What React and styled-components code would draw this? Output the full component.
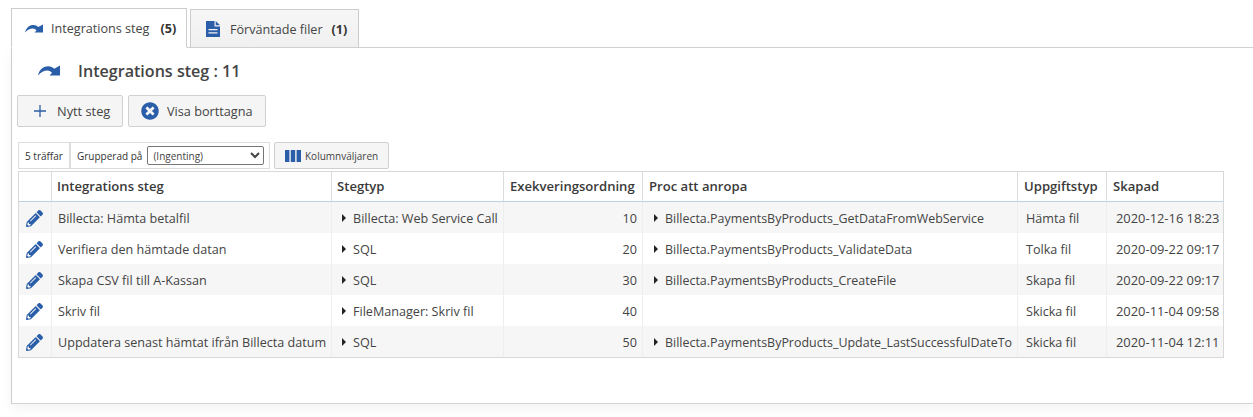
import React from 'react';
import styled, { createGlobalStyle } from 'styled-components';
import { FaPencilAlt, FaTimesCircle } from 'react-icons/fa';

const BLUE = '#2b5ea8';

const Global = createGlobalStyle`
  html, body { margin: 0; padding: 0; background: #fff; }
  body { font-family: "Open Sans", "Noto Sans", "Liberation Sans", sans-serif; color: #333; overflow: hidden; }
`;

const Page = styled.div`
  width: 1253px;
  height: 417px;
  padding: 8px 0 0 11px;
  box-sizing: border-box;
  overflow: hidden;
  background: #fff;
`;

const Tabs = styled.div`
  position: relative;
  z-index: 1;
  display: flex;
  align-items: flex-end;
  height: 40px;
  gap: 3px;
  border-bottom: 1px solid #d0d0d0;
  box-sizing: border-box;
  background: #fff;
`;

const Tab = styled.div`
  display: flex;
  align-items: center;
  box-sizing: border-box;
  width: ${p => p.$width}px;
  height: ${p => (p.$active ? 40 : 39)}px;
  padding: 1px 0 0 ${p => p.$pad}px;
  gap: ${p => p.$gap}px;
  border: 1px solid #ccc;
  border-bottom: ${p => (p.$active ? '1px solid #fff' : '1px solid #d0d0d0')};
  background: ${p => (p.$active ? '#fff' : 'linear-gradient(to bottom, #f6f6f6, #f0f0f0)')};
  font-size: 12.6px;
  color: #444;
  margin-bottom: -1px;
`;

const Count = styled.b`
  font-weight: 700;
  margin-left: ${p => p.$gap}px;
  color: #333;
`;

const Panel = styled.div`
  height: 356px;
  box-sizing: border-box;
  background: #fff;
  border-left: 1px solid #ccc;
  border-bottom: 1px solid #d4d4d4;
  padding-left: 5px;
  box-shadow: 0 5px 12px rgba(0, 0, 0, 0.05);
`;

const Title = styled.div`
  display: flex;
  align-items: center;
  height: 47px;
  padding: 0 0 2px 21px;
  box-sizing: border-box;
  gap: 18px;
  font-size: 16.1px;
  font-weight: 600;
  color: #444;
`;

const Actions = styled.div`
  display: flex;
  gap: 5px;
  height: 32px;
`;

const Button = styled.div`
  display: flex;
  align-items: center;
  box-sizing: border-box;
  width: ${p => p.$width}px;
  height: ${p => p.$height || 32}px;
  padding-left: ${p => p.$pad}px;
  gap: ${p => p.$gap}px;
  border: 1px solid #d0d0d0;
  border-radius: 2px;
  background: #f5f5f5;
  font-size: ${p => p.$size || 12.7}px;
  color: #444;
`;

const Toolbar = styled.div`
  display: flex;
  gap: 4px;
  height: 27px;
  margin: 15px 0 2px 1px;
`;

const Group = styled.div`
  display: flex;
  box-sizing: border-box;
  height: 27px;
  border: 1px solid #ddd;
  font-size: 10px;
  color: #333;
`;

const Hits = styled.div`
  display: flex;
  align-items: center;
  box-sizing: border-box;
  width: 52px;
  padding-left: 6px;
  border-right: 2px solid #ddd;
`;

const GroupBy = styled.label`
  display: flex;
  align-items: center;
  box-sizing: border-box;
  width: 198px;
  padding-left: 6px;
  gap: 5px;
`;

const Select = styled.select`
  width: 117px;
  height: 19px;
  padding: 0 0 0 1px;
  font: inherit;
  color: #444;
  background: #fff;
  border: 1px solid #767676;
  border-radius: 2px;
`;

const Table = styled.table`
  table-layout: fixed;
  border-collapse: separate;
  border-spacing: 0;
  width: 1206px;
  margin-left: 1px;
  border: 1px solid #d8d8d8;
  font-size: 12.6px;
`;

const Head = styled.th`
  box-sizing: border-box;
  height: 30px;
  padding: 0 0 1px ${p => p.$pad}px;
  text-align: left;
  font-weight: 600;
  font-size: 13.1px;
  color: #3a3a3a;
  white-space: nowrap;
  overflow: hidden;
  border-left: ${p => (p.$first ? 'none' : '1px solid #dcdcdc')};
  border-bottom: 1px solid #bcd0e8;
`;

const Row = styled.tr`
  background: ${p => (p.$odd ? '#f6f6f6' : '#fff')};
`;

const Cell = styled.td`
  box-sizing: border-box;
  height: 31px;
  padding: 1px ${p => (p.$right ? 5 : 2)}px 0 ${p => p.$pad}px;
  text-align: ${p => (p.$right ? 'right' : 'left')};
  font-size: ${p => p.$size || 12.6}px;
  color: #444;
  white-space: nowrap;
  overflow: hidden;
  border-left: ${p => (p.$first ? 'none' : '1px solid #eeeeee')};
`;

const Edit = styled(FaPencilAlt)`
  display: block;
  width: 17px;
  height: 17px;
  margin-left: -1px;
  color: ${BLUE};
`;

const Arrow = styled.span`
  display: inline-block;
  width: 0;
  height: 0;
  margin-right: 7px;
  vertical-align: 1px;
  border-left: 4px solid #222;
  border-top: 4px solid transparent;
  border-bottom: 4px solid transparent;
`;

const Redo = ({ w, h }) => (
  <svg width={w} height={h} viewBox="0 0 18 9" fill={BLUE}>
    <path d="M0 8.500C1.200 3.400 4.800 1 8.200 1c2.200 0 3.900.9 5 2.100L18 .5V8.500H9.500l2-2.100C10.600 5.300 9.400 4.500 7.700 4.500 4.900 4.500 2.500 5.900 0 8.500z" />
  </svg>
);

const DocIcon = () => (
  <svg width="14" height="16" viewBox="0 0 14 16">
    <path fill={BLUE} d="M0 0h8.500v5.500H14V16H0z" />
    <path fill={BLUE} d="M9.700 0 14 4.300H9.700z" />
    <path fill="#f4f4f4" d="M2.500 8h9v1.300h-9zM2.500 11.200h9v1.300h-9z" />
  </svg>
);

const ColumnsIcon = () => (
  <svg width="16" height="12" viewBox="0 0 16 12" fill={BLUE}>
    <rect x="0" y="0" width="4.400" height="12" />
    <rect x="5.800" y="0" width="4.400" height="12" />
    <rect x="11.600" y="0" width="4.400" height="12" />
  </svg>
);

const PlusIcon = () => (
  <svg width="14" height="14" viewBox="0 0 14 14" stroke={BLUE} strokeWidth="1.300">
    <path d="M7 1v12M1 7h12" />
  </svg>
);

const columns = [
  { title: '', width: 32, pad: 6 },
  { title: 'Integrations steg', width: 280, pad: 5 },
  { title: 'Stegtyp', width: 172, pad: 5 },
  { title: 'Exekveringsordning', width: 139, pad: 6 },
  { title: 'Proc att anropa', width: 375, pad: 6 },
  { title: 'Uppgiftstyp', width: 89, pad: 6 },
  { title: 'Skapad', width: 117, pad: 6 },
];

const rows = [
  ['Billecta: Hämta betalfil', 'Billecta: Web Service Call', 10, 'Billecta.PaymentsByProducts_GetDataFromWebService', 'Hämta fil', '2020-12-16 18:23'],
  ['Verifiera den hämtade datan', 'SQL', 20, 'Billecta.PaymentsByProducts_ValidateData', 'Tolka fil', '2020-09-22 09:17'],
  ['Skapa CSV fil till A-Kassan', 'SQL', 30, 'Billecta.PaymentsByProducts_CreateFile', 'Skapa fil', '2020-09-22 09:17'],
  ['Skriv fil', 'FileManager: Skriv fil', 40, '', 'Skicka fil', '2020-11-04 09:58'],
  ['Uppdatera senast hämtat ifrån Billecta datum', 'SQL', 50, 'Billecta.PaymentsByProducts_Update_LastSuccessfulDateTo', 'Skicka fil', '2020-11-04 12:11'],
];

export default function App() {
  return (
    <Page>
      <Global />
      <Tabs>
        <Tab $active $width={176} $pad={13} $gap={8}>
          <Redo w={18} h={9} />
          <span>Integrations steg<Count $gap={11}>(5)</Count></span>
        </Tab>
        <Tab $width={169} $pad={15} $gap={10}>
          <DocIcon />
          <span>Förväntade filer<Count $gap={9}>(1)</Count></span>
        </Tab>
      </Tabs>
      <Panel>
        <Title>
          <Redo w={22} h={11} />
          <span>Integrations steg : 11</span>
        </Title>
        <Actions>
          <Button $width={106} $pad={15} $gap={10} $size={12.8}><PlusIcon />Nytt steg</Button>
          <Button $width={138} $pad={12} $gap={8}><FaTimesCircle size={18} color={BLUE} />Visa borttagna</Button>
        </Actions>
        <Toolbar>
          <Group>
            <Hits>5 träffar</Hits>
            <GroupBy>
              Grupperad på
              <Select defaultValue="none"><option value="none">(Ingenting)</option></Select>
            </GroupBy>
          </Group>
          <Button $width={115} $height={27} $pad={10} $gap={4} $size={10}><ColumnsIcon />Kolumnväljaren</Button>
        </Toolbar>
        <Table>
          <colgroup>
            {columns.map((c, i) => <col key={i} style={{ width: c.width }} />)}
          </colgroup>
          <thead>
            <tr>
              {columns.map((c, i) => <Head key={i} $first={i === 0} $pad={c.pad}>{c.title}</Head>)}
            </tr>
          </thead>
          <tbody>
            {rows.map((r, i) => (
              <Row key={i} $odd={i % 2 === 0}>
                <Cell $first $pad={8}><Edit /></Cell>
                <Cell $pad={6}>{r[0]}</Cell>
                <Cell $pad={10}><Arrow />{r[1]}</Cell>
                <Cell $right $pad={8}>{r[2]}</Cell>
                <Cell $pad={11} $size={12.45}>{r[3] && <><Arrow />{r[3]}</>}</Cell>
                <Cell $pad={8}>{r[4]}</Cell>
                <Cell $pad={9} $size={12.9}>{r[5]}</Cell>
              </Row>
            ))}
          </tbody>
        </Table>
      </Panel>
    </Page>
  );
}
